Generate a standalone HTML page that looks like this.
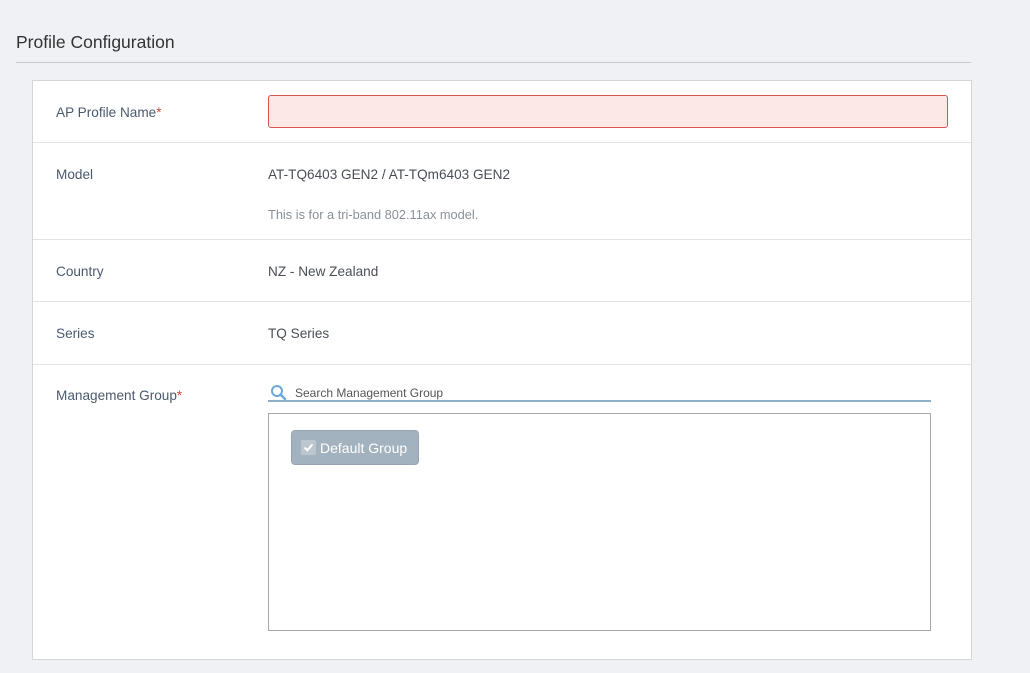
<!DOCTYPE html>
<html><head><meta charset="utf-8"><style>
body{margin:0;width:1030px;height:673px;background:#f0f1f5;font-family:"Liberation Sans",sans-serif;position:relative;overflow:hidden;color:#4a5568}
.h{position:absolute;left:16px;top:32px;font-size:17.5px;color:#333}
.hl{position:absolute;left:16px;top:62px;width:955px;height:1px;background:#c8c9cc}
.panel{position:absolute;left:32px;top:80px;width:938px;height:578px;background:#fff;border:1px solid #d4d5d8}
.row{position:absolute;left:0;width:938px;border-bottom:1px solid #e2e3e6}
.lab{position:absolute;left:23px;font-size:13.6px;color:#4a5a6e}
.val{position:absolute;left:235px;font-size:13.6px;color:#4a4f57}
.req{color:#d9443a}
</style></head><body>
<div class="h">Profile Configuration</div>
<div class="hl"></div>
<div class="panel">
 <div class="row" style="top:0;height:61px">
  <div class="lab" style="top:24px">AP Profile Name<span class="req">*</span></div>
  <div style="position:absolute;left:235px;top:14px;width:678px;height:31px;background:#fde8e8;border:1px solid #d9534f;border-radius:3px"></div>
 </div>
 <div class="row" style="top:62px;height:96px">
  <div class="lab" style="top:24px">Model</div>
  <div class="val" style="top:24px">AT-TQ6403 GEN2 / AT-TQm6403 GEN2</div>
  <div class="val" style="top:64px;font-size:12.8px;color:#8a9099">This is for a tri-band 802.11ax model.</div>
 </div>
 <div class="row" style="top:159px;height:61px">
  <div class="lab" style="top:24px">Country</div>
  <div class="val" style="top:24px">NZ - New Zealand</div>
 </div>
 <div class="row" style="top:221px;height:62px">
  <div class="lab" style="top:24px">Series</div>
  <div class="val" style="top:24px">TQ Series</div>
 </div>
 <div class="lab" style="top:307px">Management Group<span class="req">*</span></div>
 <svg style="position:absolute;left:237px;top:303px" width="18" height="18" viewBox="0 0 18 18"><circle cx="7" cy="7" r="5" fill="none" stroke="#6fa6d8" stroke-width="2"/><line x1="10.5" y1="10.5" x2="15" y2="15" stroke="#6fa6d8" stroke-width="2.6" stroke-linecap="round"/></svg>
 <div style="position:absolute;left:262px;top:305px;font-size:12px;color:#555">Search Management Group</div>
 <div style="position:absolute;left:235px;top:319px;width:663px;height:2px;background:#8fafc8"></div>
 <div style="position:absolute;left:235px;top:332px;width:661px;height:216px;border:1px solid #a8a8a8"></div>
 <div style="position:absolute;left:258px;top:349px;width:126px;height:33px;background:#a3b2bf;border:1px solid #95a5b3;border-radius:4px">
  <div style="position:absolute;left:9px;top:9px;width:15px;height:15px;background:#bcc6cf;border-radius:2px"></div>
  <svg style="position:absolute;left:9px;top:9px" width="15" height="15" viewBox="0 0 15 15"><path d="M3.5 7.5 L6.3 10.3 L11.5 4.2" fill="none" stroke="#fff" stroke-width="1.9"/></svg>
  <div style="position:absolute;left:28px;top:9px;font-size:14px;color:#fff">Default Group</div>
 </div>
</div>
</body></html>
